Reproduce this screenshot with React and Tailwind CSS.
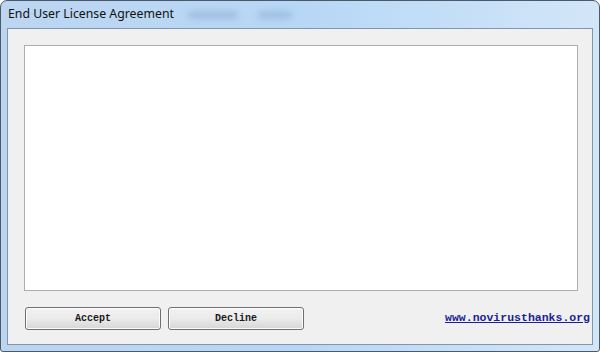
import React from "react";

const mono = { fontFamily: '"Liberation Mono", "Courier New", monospace' };

const Button = ({ label }) => (
  <button
    className="w-[136px] h-[23px] rounded-[3px] border border-[#707070] bg-gradient-to-b from-[#f2f2f2] via-[#ebebeb] to-[#d6d6d6] text-[10px] font-bold text-[#1a1a1a] flex items-center justify-center shadow-[inset_0_0_0_1px_#fcfcfc]"
    style={mono}
  >
    {label}
  </button>
);

export default function App() {
  return (
    <div className="w-[600px] h-[352px] overflow-hidden bg-white">
      <div className="w-[600px] h-[352px] flex flex-col rounded-t-[7px] rounded-b-[3px] border border-[#4b5a6b] bg-gradient-to-r from-[#bcd6f1] via-[#b7d7f6] to-[#d2e6f8]">
        {/* title bar */}
        <div className="h-[27px] flex items-center pl-[7px] gap-[10px]">
          <span
            className="text-[12.3px] text-[#111]"
            style={{ fontFamily: '"Noto Sans", "Open Sans", sans-serif' }}
          >
            End User License Agreement
          </span>
          <span className="ml-[4px] w-[50px] h-[8px] rounded-full bg-[#8fb0d4] blur-[3px] opacity-60" />
          <span className="ml-[10px] w-[34px] h-[8px] rounded-full bg-[#8fb0d4] blur-[3px] opacity-60" />
        </div>

        {/* client area */}
        <div className="flex-1 mx-[6px] mb-[6px] border border-[#8196ad] bg-[#f0f0f0] flex flex-col pt-[16px] pl-[16px] pr-[14px]">
          <div className="h-[246px] bg-white border border-[#abadb3]" />
          <div className="flex items-start mt-[16px] pl-[1px]">
            <div className="flex gap-[7px]">
              <Button label="Accept" />
              <Button label="Decline" />
            </div>
            <a
              href="#"
              className="ml-auto mr-[-12px] mt-[3px] text-[11.5px] leading-[16px] font-bold text-[#1a1f96] underline"
              style={mono}
            >
              www.novirusthanks.org
            </a>
          </div>
        </div>
      </div>
    </div>
  );
}
